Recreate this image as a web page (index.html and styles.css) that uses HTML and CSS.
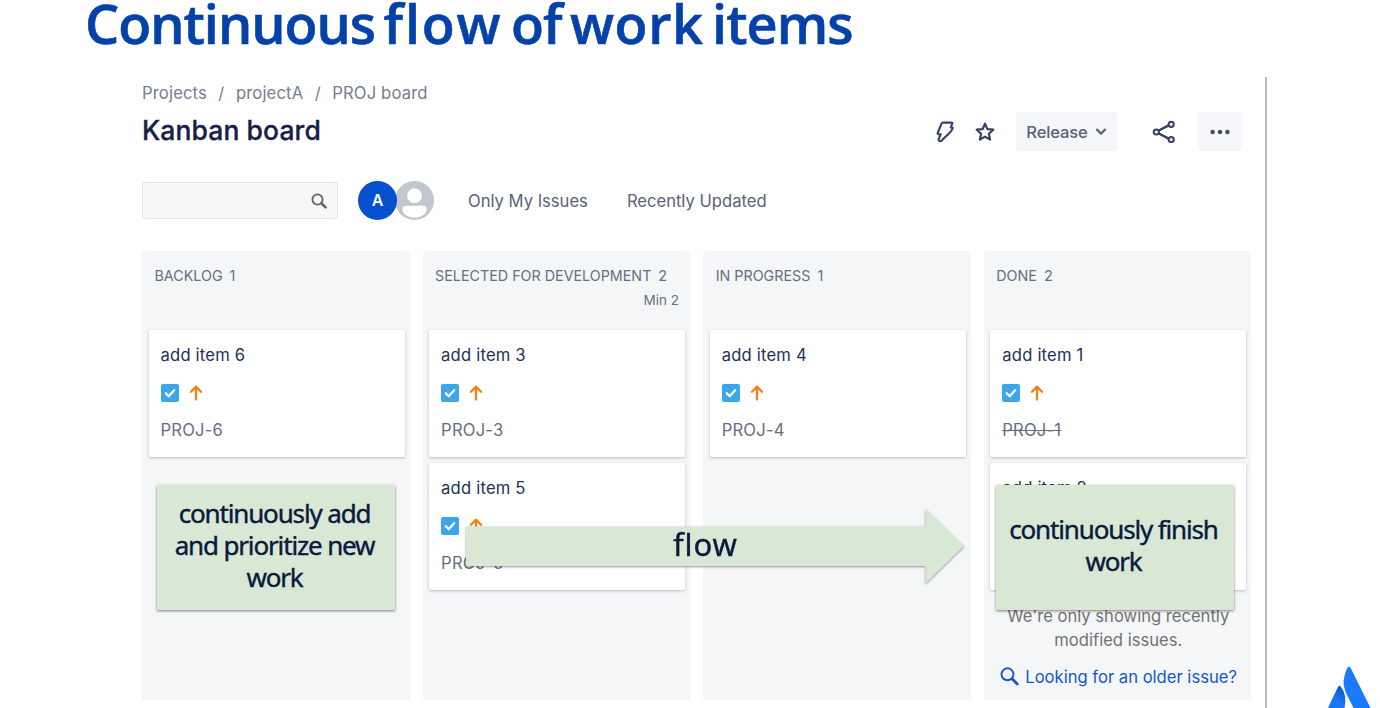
FILE: index.html
```html
<!DOCTYPE html>
<html lang="en">
<head>
<meta charset="utf-8">
<title>Continuous flow of work items</title>
<link rel="stylesheet" href="styles.css">
</head>
<body>
<svg class="defs" width="0" height="0" aria-hidden="true">
  <symbol id="task" viewBox="0 0 18 18"><rect width="18" height="18" rx="2" fill="#3ba6ec"/><path d="M4.8 9.3l2.9 2.9 5.4-6" fill="none" stroke="#fff" stroke-width="2.3" stroke-linecap="round" stroke-linejoin="round"/></symbol>
  <symbol id="up" viewBox="0 0 14 16"><path d="M7 14.6V2.2M2 6.7L7 1.6l5 5.1" fill="none" stroke="#f08219" stroke-width="2.3" stroke-linecap="round" stroke-linejoin="round"/></symbol>
</svg>
<h1 class="slide-title">Continuous <span class="wide">flow</span> of <span class="tight">work</span> items</h1>
<main class="frame">
  <nav class="crumbs"><span>Projects</span><i>/</i><span>projectA</span><i>/</i><span>PROJ board</span></nav>
  <header class="head">
    <h2>Kanban board</h2>
    <div class="actions">
      <svg class="bolt" width="18" height="22" viewBox="0 0 18 22"><path d="M7 1.600h8.600q1 0 .7.900l-1.500 4h1.200q1.200 0 .6 1.100-1.200 2.600-3.400 4.600L5.600 19.600q-1.100.9-2.300.2-1.100-.7-.5-2l1.900-4.600H2.600q-1.300 0-.9-1.200L5.500 2.600q.4-1 1.500-1z" fill="none" stroke="#344067" stroke-width="2.100" stroke-linejoin="round"/></svg>
      <svg class="star" width="20" height="20" viewBox="0 0 20 20"><path d="M10 1.700l2.400 5.400 5.900.6-4.400 4 1.200 5.900-5.100-3-5.100 3 1.200-5.900-4.400-4 5.900-.6z" fill="none" stroke="#344067" stroke-width="2.200" stroke-linejoin="round"/></svg>
      <button class="btn release">Release<svg width="12" height="8" viewBox="0 0 12 8"><path d="M2 1.600l4 4 4-4" fill="none" stroke="#60667a" stroke-width="2.200" stroke-linecap="round" stroke-linejoin="round"/></svg></button>
      <svg class="share" width="24" height="24" viewBox="0 0 24 24" fill="none" stroke="#344067" stroke-width="2"><path d="M6.300 10.800l10.900-5.700M6.300 13.200l10.900 5.700" stroke-width="2.400"/><circle cx="4.300" cy="12" r="2.600"/><circle cx="19.200" cy="4.300" r="2.600"/><circle cx="19.200" cy="19.500" r="2.600"/></svg>
      <button class="btn more"><svg width="20" height="6" viewBox="0 0 20 6" fill="#4a4f60"><circle cx="2.600" cy="3" r="2.300"/><circle cx="10" cy="3" r="2.300"/><circle cx="17.400" cy="3" r="2.300"/></svg></button>
    </div>
  </header>
  <section class="filters">
    <div class="search"><svg width="16" height="16" viewBox="0 0 16 16" fill="none" stroke="#666"><circle cx="6.500" cy="6.500" r="5.100" stroke-width="1.900"/><path d="M10.300 10.300l4.200 4" stroke-width="2.600" stroke-linecap="round"/></svg></div>
    <div class="avatar user">A</div>
    <div class="avatar nobody"><svg width="39" height="39" viewBox="0 0 39 39" fill="#fff"><circle cx="19.500" cy="14.700" r="7.400"/><path d="M10.500 24.700h18q3.200 0 3.200 3.300c0 5-6 8.600-12.200 8.600S7.300 33 7.300 28q0-3.300 3.200-3.300z"/></svg></div>
    <span class="filter mine">Only My Issues</span>
    <span class="filter recent">Recently Updated</span>
  </section>
  <section class="board">
    <div class="col">
      <div class="col-head"><span class="name">BACKLOG</span><span>1</span></div>
      <article class="card"><p>add item 6</p><div class="icons"><svg class="task"><use href="#task"/></svg><svg class="up"><use href="#up"/></svg></div><span class="key">PROJ-6</span></article>
    </div>
    <div class="col">
      <div class="col-head"><span class="name">SELECTED FOR DEVELOPMENT</span><span>2</span><small>Min 2</small></div>
      <article class="card"><p>add item 3</p><div class="icons"><svg class="task"><use href="#task"/></svg><svg class="up"><use href="#up"/></svg></div><span class="key">PROJ-3</span></article>
      <article class="card"><p>add item 5</p><div class="icons"><svg class="task"><use href="#task"/></svg><svg class="up"><use href="#up"/></svg></div><span class="key">PROJ-5</span></article>
    </div>
    <div class="col">
      <div class="col-head"><span class="name">IN PROGRESS</span><span>1</span></div>
      <article class="card"><p>add item 4</p><div class="icons"><svg class="task"><use href="#task"/></svg><svg class="up"><use href="#up"/></svg></div><span class="key">PROJ-4</span></article>
    </div>
    <div class="col">
      <div class="col-head"><span class="name">DONE</span><span>2</span></div>
      <article class="card"><p>add item 1</p><div class="icons"><svg class="task"><use href="#task"/></svg><svg class="up"><use href="#up"/></svg></div><span class="key done">PROJ-1</span></article>
      <article class="card"><p>add item 2</p></article>
      <p class="hint">We're only showing recently<br>modified issues.</p>
      <a class="older"><svg width="19" height="19" viewBox="0 0 19 19" fill="none" stroke="#1557cf"><circle cx="7.500" cy="7.300" r="6" stroke-width="1.900"/><path d="M12.200 12l5 5" stroke-width="2.800" stroke-linecap="round"/></svg><span>Looking for an older issue?</span></a>
    </div>
  </section>
</main>
<div class="note add"><p>continuously add<br>and prioritize new<br>work</p></div>
<div class="arrow"><svg width="500" height="78" viewBox="0 0 500 78"><path d="M1 18.500h459.500V1l38.500 37-38.500 37.500V58H1z" fill="#d9e8d5"/></svg><span>flow</span></div>
<div class="note finish"><p>continuously finish<br>work</p></div>
<svg class="logo" width="44" height="44" viewBox="0 0 44 44">
  <defs><linearGradient id="lg" x1="1" y1="0" x2=".4" y2="1"><stop offset="0" stop-color="#0a50bd"/><stop offset=".7" stop-color="#1b76f5"/></linearGradient></defs>
  <path d="M1 43Q6 32 11 22q1.300-2.400 2.700-.5Q20.500 30 17.500 43z" fill="url(#lg)"/>
  <path d="M20.200 3Q22 .5 23.700 3L43.500 43H26.500L18.500 27Q14 16 20.200 3z" fill="#1b7afb"/>
</svg>
</body>
</html>
```
FILE: styles.css
```css
* { box-sizing: border-box; }
body { margin: 0; width: 1380px; height: 708px; overflow: hidden; position: relative; background: #fff; font-family: Inter, "Liberation Sans", sans-serif; font-size: 16.600px; color: #24305a; }
h1, h2, p { margin: 0; }
svg { display: block; flex: none; }
.defs { position: absolute; }
.slide-title { height: 77px; padding-left: 85px; font: 600 54px/47px "Open Sans", sans-serif; letter-spacing: -1px; word-spacing: -4.500px; color: #0442a9; white-space: nowrap; -webkit-text-stroke: .6px #0442a9; }
.wide { letter-spacing: 1.800px; }
.tight { letter-spacing: .6px; }
.frame { width: 1267px; height: 631px; padding: 4px 14px 0 142px; border-right: 2px solid #bcbcbc; }
.crumbs { display: flex; height: 24px; line-height: 25px; color: #767d8e; letter-spacing: .15px; }
.crumbs i { font-style: normal; width: 29px; text-align: center; }
.head { display: flex; justify-content: space-between; height: 58px; }
h2 { font-size: 26.500px; line-height: 50px; font-weight: 500; letter-spacing: .1px; color: #172047; -webkit-text-stroke: .3px #172047; white-space: nowrap; }
.actions { display: flex; align-items: center; height: 40px; margin: 6.500px 9px 0 0; }
.star { margin-left: 21px; }
.btn { display: flex; align-items: center; justify-content: center; height: 39px; padding: 0; border: 0; border-radius: 3px; background: #f4f6f9; font: 500 16.500px Inter, sans-serif; color: #5a6178; }
.release { width: 101px; margin-left: 21px; gap: 7px; letter-spacing: -.1px; }
.share { margin-left: 35px; }
.more { width: 44px; margin-left: 22px; }
.filters { display: flex; align-items: center; height: 74px; }
.search { display: flex; align-items: center; justify-content: flex-end; width: 196px; height: 37px; padding: 2px 10px 0 0; border: 1.500px solid #e3e5e9; border-radius: 3px; background: #f6f7f8; }
.avatar { width: 39px; height: 39px; border-radius: 50%; }
.user { margin-left: 20px; background: #0650d0; color: #fff; font-size: 16px; font-weight: 600; line-height: 39px; text-align: center; position: relative; z-index: 1; }
.nobody { margin-left: -2px; background: #c2c6cd; }
.filter { color: #5a6279; white-space: nowrap; padding-top: 1px; }
.mine { margin-left: 34px; }
.recent { margin-left: 39px; }
.board { display: grid; grid-template-columns: repeat(4, 267.500px); gap: 13.100px; margin-top: 14px; }
.col { height: 449px; padding: 0 5px 0 6.500px; border-radius: 4px 4px 0 0; background: #f4f6f8; }
.col-head { display: flex; flex-wrap: wrap; align-content: flex-start; gap: 0 7px; height: 78.500px; padding: 13px 6px 0 6px; font-size: 14.300px; line-height: 24px; color: #666e80; white-space: nowrap; }
.col-head small { width: 100%; text-align: right; font-size: 13.500px; }
.card { height: 127.500px; margin: 0 0 5.500px; padding: 12px; border-radius: 2px; background: #fff; box-shadow: 0 1px 3px rgba(30, 40, 65, .28); line-height: 27px; letter-spacing: .2px; }
.icons { display: flex; align-items: center; gap: 10px; height: 48px; }
.task { width: 18px; height: 18px; }
.up { width: 14px; height: 16px; }
.key { display: block; color: #666e80; white-space: nowrap; }
.done { width: 60px; text-decoration: line-through; }
.hint { margin-top: 14px; text-align: center; line-height: 24px; color: #737373; white-space: nowrap; }
.older { display: flex; align-items: center; gap: 6px; margin: 12px 0 0 10px; height: 25px; color: #1557cf; white-space: nowrap; }
.note { position: absolute; top: 485px; width: 238px; height: 125px; padding-bottom: 5px; display: flex; align-items: center; justify-content: center; text-align: center; background: #d9e8d5; box-shadow: 0 1px 2.500px rgba(0, 0, 0, .5); font: 400 26px/32.200px "Noto Sans", sans-serif; letter-spacing: -1.150px; color: #091a3d; white-space: nowrap; -webkit-text-stroke: .4px #091a3d; }
.add { left: 156.500px; }
.finish { left: 995.500px; }
.note p { margin-left: -2px; }
.arrow { position: absolute; left: 465px; top: 508px; width: 500px; height: 78px; filter: drop-shadow(0 1px 1px rgba(0, 0, 0, .4)); }
.arrow span { position: absolute; left: 208px; top: 18px; font: 400 31px/36px "Noto Sans", sans-serif; letter-spacing: .9px; color: #091a3d; -webkit-text-stroke: .4px #091a3d; }
.logo { position: absolute; left: 1327px; top: 665px; }
```
